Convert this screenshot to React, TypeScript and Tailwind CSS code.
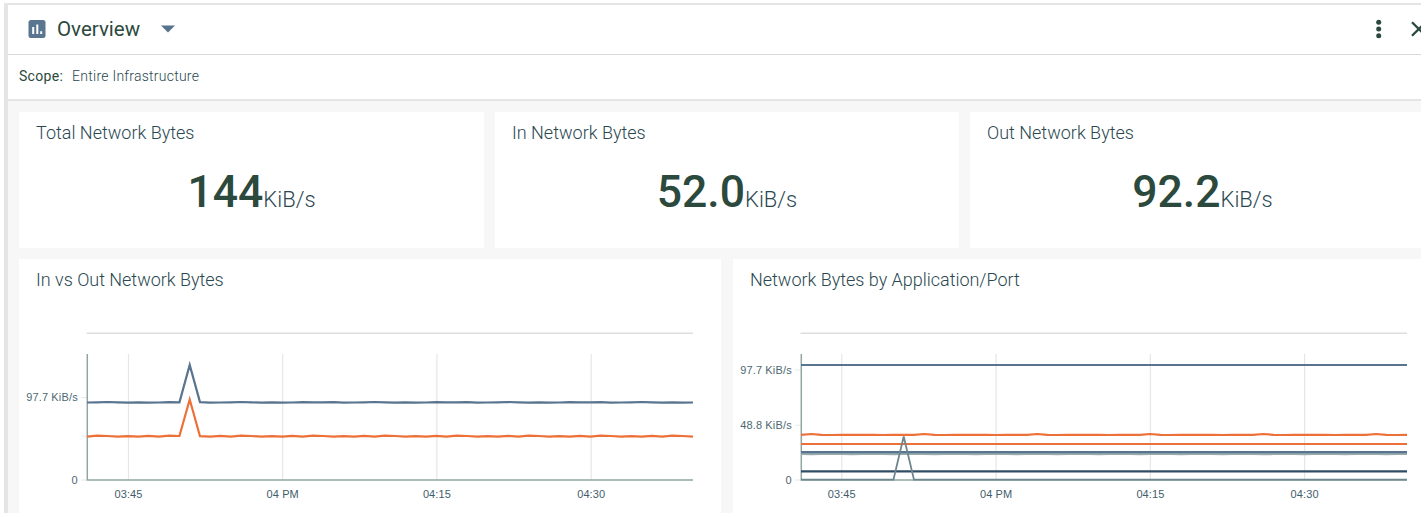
import React from "react";

type Point = [number, number];

type Series = {
  color: string;
  width?: number;
  points: Point[];
};

const X0 = 68;
const X1 = 674;
const STEP = (X1 - X0) / 59;

// Samples one value per minute; wobble entries shift single samples vertically.
function flat(y: number, wobble: number[] = [0]): Point[] {
  return Array.from({ length: 60 }, (_, i): Point => [
    X0 + i * STEP,
    y + wobble[i % wobble.length],
  ]);
}

function withSpike(points: Point[], index: number, y: number): Point[] {
  return points.map((p, i): Point => (i === index ? [p[0], y] : p));
}

const SMALL = [0.2, 0, -0.3, 0.1, 0.3, 0, 0.4, 0.2, -0.1, 0.1, 0.1, -0.2, 0.3];
const RIPPLE = [0.4, -0.5, -0.2, 0.5, 0, 0.5, -0.3];
const GENTLE = [0, -0.8, 0, 0.2, 0, 0.1, 0, 0, 0.2, 0, 0];

const inOut: Series[] = [
  { color: "#59748f", points: withSpike(flat(143.3, SMALL), 10, 106) },
  { color: "#ec7038", points: withSpike(flat(177.2, RIPPLE), 10, 140.5) },
];

const byPort: Series[] = [
  { color: "#59748f", points: flat(106) },
  { color: "#ec7038", points: flat(175.8, GENTLE) },
  { color: "#ec7038", points: flat(185) },
  { color: "#9aabaf", points: flat(195, [0, 0.2, 0, -0.2]) },
  { color: "#59748f", points: flat(193.1, [0, 0.1, 0]) },
  { color: "#2f4d64", points: flat(212.3) },
  { color: "#6e868d", width: 1.8, points: withSpike(flat(220.6), 10, 177.5) },
];

function Chart({
  series,
  yTicks,
  gridX,
}: {
  series: Series[];
  yTicks: { y: number; label?: string }[];
  gridX: number[];
}) {
  const labels = ["03:45", "04 PM", "04:15", "04:30"];
  return (
    <svg width="702" height="254" className="block shrink-0" fontFamily="'Liberation Sans', Arial, sans-serif">
      <line x1={X0 - 0.5} x2={X1} y1="74.3" y2="74.3" stroke="#dedede" strokeWidth="1.6" />
      {gridX.map((x) => (
        <line key={x} x1={x} x2={x} y1="95" y2="221" stroke="#e6e6e6" strokeWidth="1.2" />
      ))}
      {yTicks.map((t) => (
        <g key={t.y}>
          <line x1="62" x2="68" y1={t.y} y2={t.y} stroke="#e6e9e9" />
          {t.label && (
            <text x="58.8" y={t.y + 3.5} textAnchor="end" fontSize="11" letterSpacing="0.15" fill="#4c6873">
              {t.label}
            </text>
          )}
        </g>
      ))}
      <path d="M68.3 95V221H674" fill="none" stroke="#90a6a3" strokeWidth="1.5" />
      {series.map((s, i) => (
        <polyline
          key={i}
          points={s.points.map((p) => p.join(",")).join(" ")}
          fill="none"
          stroke={s.color}
          strokeWidth={s.width ?? 2.2}
        />
      ))}
      {gridX.map((x, i) => (
        <text key={x} x={x} y="238.5" textAnchor="middle" fontSize="11" letterSpacing="0.1" fill="#3f5d6a">
          {labels[i]}
        </text>
      ))}
    </svg>
  );
}

function Metric({ title, value }: { title: string; value: string }) {
  return (
    <section className="h-[136px] bg-white">
      <h2 className="pt-[9px] pl-[17px] text-[18px] leading-6 font-light whitespace-nowrap">
        {title}
      </h2>
      <div className="mt-[19px] flex items-baseline justify-center leading-[56px]">
        <span className="text-[44.5px] font-medium text-[#2b493d]">{value}</span>
        <span className="text-[22px] font-light">KiB/s</span>
      </div>
    </section>
  );
}

function ChartCard({ title, children }: { title: string; children: React.ReactNode }) {
  return (
    <section className="grid h-[254px] overflow-hidden bg-white">
      <h2 className="z-10 col-start-1 row-start-1 h-6 pt-[9px] pl-[17px] text-[18px] leading-6 font-light tracking-[-0.02px] whitespace-nowrap">
        {title}
      </h2>
      <div className="col-start-1 row-start-1">{children}</div>
    </section>
  );
}

export default function App() {
  return (
    <div className="h-[517px] w-[1425px] overflow-hidden bg-white pt-[3px] pl-1 font-['Roboto',sans-serif] text-[#2a4850]">
      <main className="flex h-[510px] w-[1417px] flex-col overflow-hidden border-t-2 border-l-4 border-[#e5e5e5]">
        <header className="flex h-[50px] shrink-0 items-center border-b border-[#d8dadb] pb-[2px] pl-[20px] text-[#2b493d]">
          <svg width="18" height="18" viewBox="0 0 18 18">
            <rect x=".5" width="17" height="18" rx="2.5" fill="#5a7590" />
            <path d="M5.2 7V14M9.3 4.5V14M13.2 11.2V14" stroke="#fff" strokeWidth="2" />
          </svg>
          <h1 className="ml-[11px] text-[20.5px] leading-6 font-normal whitespace-nowrap">Overview</h1>
          <svg className="ml-[21px]" width="14" height="8" viewBox="0 0 14 8">
            <path d="M0 .5H14L7 7.5Z" fill="#56728c" />
          </svg>
          <div className="ml-auto flex items-center">
            <svg width="6" height="20" viewBox="0 0 6 20" fill="#2b493d">
              <circle cx="2.7" cy="3.3" r="2.5" />
              <circle cx="2.7" cy="10" r="2.5" />
              <circle cx="2.7" cy="16.7" r="2.5" />
            </svg>
            <svg className="ml-[29px]" width="10" height="16" viewBox="0 0 10 16">
              <path d="M1 1.2L14.6 14.8M1 14.8L14.6 1.2" fill="none" stroke="#2b493d" strokeWidth="2.3" />
            </svg>
          </div>
        </header>
        <div className="flex h-[46px] shrink-0 items-center gap-[9px] border-b-2 border-[#e5e5e5] pb-px pl-[11px] text-[14px] whitespace-nowrap">
          <span className="tracking-[0.3px] text-[#2b493d]">Scope:</span>
          <span className="font-light tracking-[0.25px]">Entire Infrastructure</span>
        </div>
        <div className="flex-1 bg-[#f7f7f7] pt-[11px] pl-[11px]">
          <div className="grid w-[1416px] grid-cols-[465px_464px_465px] gap-x-[11px]">
            <Metric title="Total Network Bytes" value="144" />
            <Metric title="In Network Bytes" value="52.0" />
            <Metric title="Out Network Bytes" value="92.2" />
          </div>
          <div className="mt-[11px] grid w-[1416px] grid-cols-[702px_702px] gap-x-[12px]">
            <ChartCard title="In vs Out Network Bytes">
              <Chart
                series={inOut}
                yTicks={[{ y: 138.5, label: "97.7 KiB/s" }, { y: 177 }, { y: 221, label: "0" }]}
                gridX={[109.5, 263.7, 417.9, 572.2]}
              />
            </ChartCard>
            <ChartCard title="Network Bytes by Application/Port">
              <Chart
                series={byPort}
                yTicks={[
                  { y: 111, label: "97.7 KiB/s" },
                  { y: 166.2, label: "48.8 KiB/s" },
                  { y: 221, label: "0" },
                ]}
                gridX={[108.8, 263.1, 417.4, 571.6]}
              />
            </ChartCard>
          </div>
        </div>
      </main>
    </div>
  );
}
